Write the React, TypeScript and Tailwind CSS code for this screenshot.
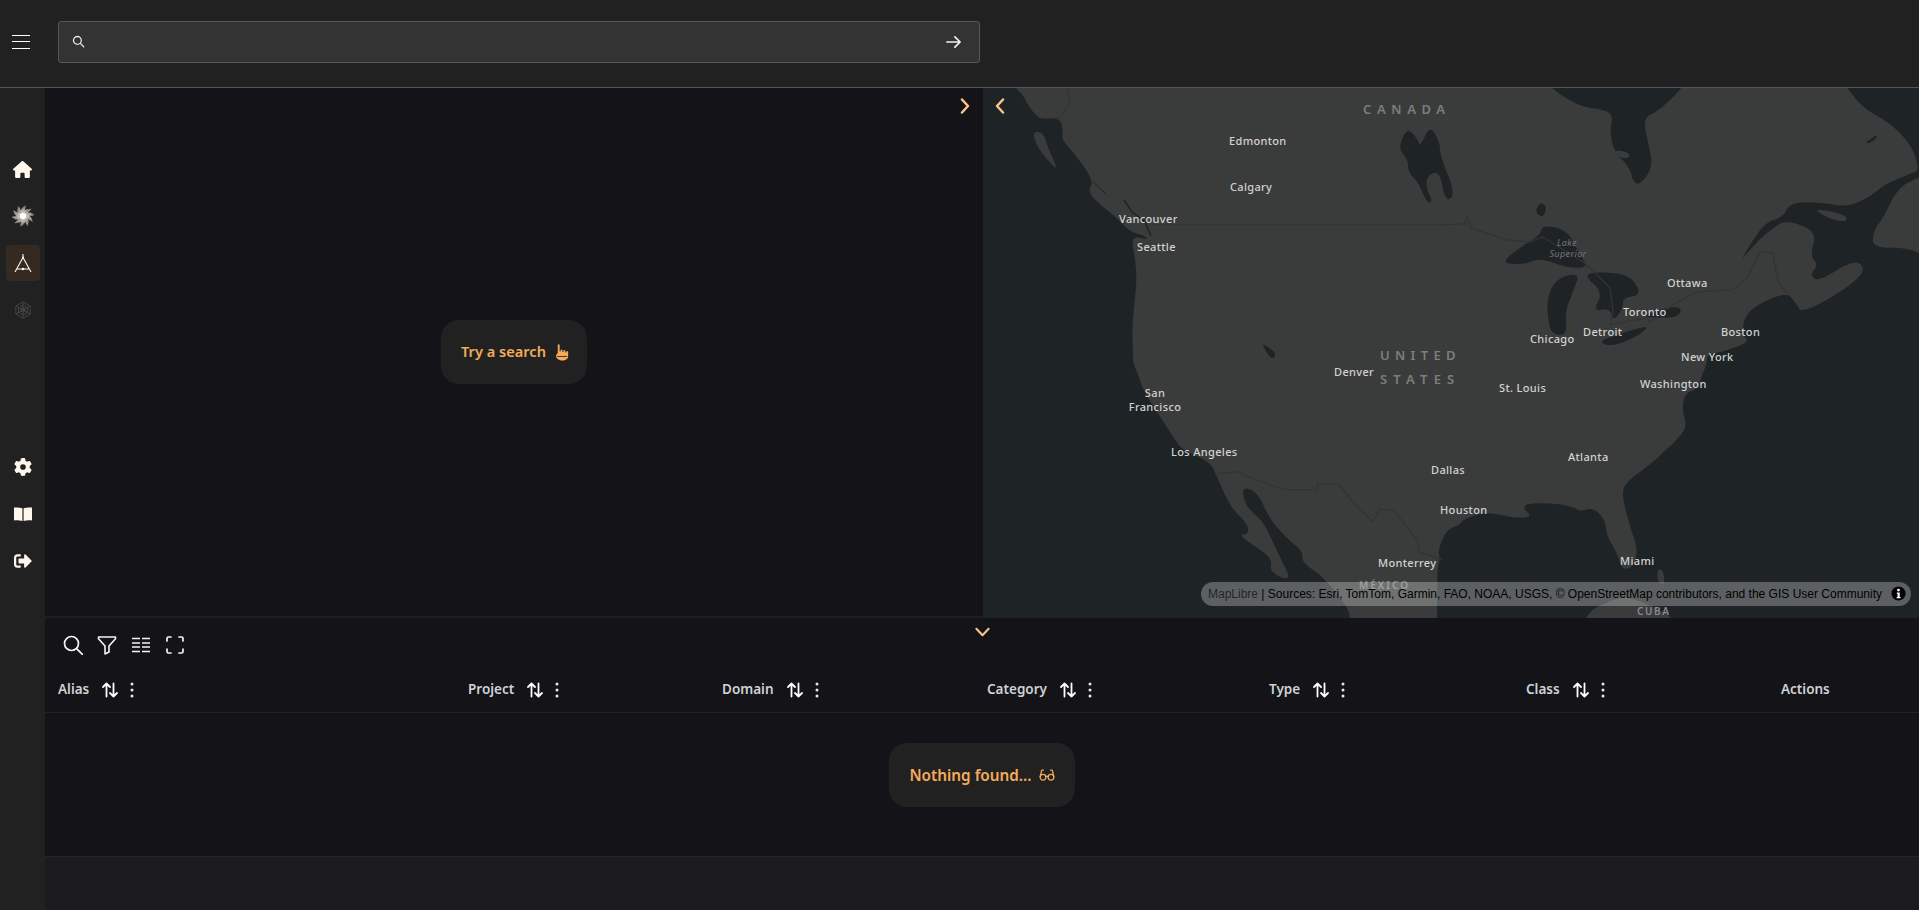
import React from "react";
import { FaSignOutAlt } from "react-icons/fa";
import { FaHouse, FaGear } from "react-icons/fa6";

const LAND = "#3a3c3c";
const WATER = "#1e2326";

const waterPolys = [
  "960,70 960,70 1012,70 1012,70 1015,88 1023,95 1028,105 1037,117 1043,119 1060,118 1063,130 1062,140 1073,152 1085,168 1093,182 1088,192 1100,205 1117,218 1130,232 1145,236 1148,240 1131,236 1135,258 1137,282 1132,325 1133,353 1133,363 1139,377 1143,390 1160,417 1175,440 1182,450 1210,462 1217,477 1230,507 1248,525 1248,535 1238,535 1260,550 1272,560 1270,573 1292,582 1280,558 1265,525 1255,515 1245,505 1242,487 1257,492 1270,520 1288,540 1303,552 1302,563 1323,577 1347,607 1350,617 1352,640 1352,640 960,640 960,640",
  "1437,640 1437,640 1437,570 1440,560 1438,550 1447,530 1460,525 1463,520 1483,513 1500,515 1513,518 1533,518 1520,505 1547,503 1573,507 1580,512 1593,508 1605,520 1607,537 1617,553 1622,570 1633,568 1638,550 1630,527 1622,497 1625,483 1650,465 1663,453 1677,440 1687,427 1682,410 1685,393 1697,390 1703,373 1707,363 1707,355 1723,352 1750,342 1742,335 1745,315 1762,302 1787,293 1795,302 1803,315 1867,275 1857,258 1818,282 1810,275 1818,265 1810,255 1817,232 1787,220 1773,228 1757,242 1742,259 1742,259 1750,245 1765,223 1783,217 1790,203 1817,202 1847,207 1868,198 1887,183 1913,173 1919,170 1913,148 1893,125 1863,108 1847,88 1835,70 1835,70 1945,70 1945,70 1945,640 1945,640",
  "1540,70 1540,70 1550,88 1580,107 1607,110 1613,118 1610,128 1613,150 1630,168 1633,182 1640,185 1653,167 1648,142 1643,118 1660,110 1682,88 1695,70 1695,70",
  "1535,212 1540,202 1547,207 1543,218",
  "1500,263 1527,243 1540,235 1543,225 1567,230 1580,255 1588,268 1567,268 1540,258 1523,265",
  "1547,298 1557,278 1580,273 1573,292 1565,312 1567,335 1553,335 1548,322",
  "1583,275 1600,272 1630,275 1642,295 1623,298 1623,308 1613,322 1610,308 1593,312 1603,292",
  "1598,342 1617,335 1650,325 1640,335 1613,347",
  "1640,317 1670,307 1682,308 1678,317 1663,318",
  "1398,148 1407,128 1417,138 1420,147 1430,125 1440,143 1440,155 1452,185 1453,198 1445,200 1440,173 1430,173 1425,185 1433,202 1427,203 1418,182 1408,172 1408,160",
  "1262,343 1275,352 1275,358 1270,358 1265,350",
  "1866,142 1878,134 1876,139 1868,144",
];

const landPolys = [
  "1032,132 1043,132 1048,148 1058,170 1050,163 1038,148",
  "1917,178 1898,188 1883,218 1873,232 1873,248 1907,248 1925,256 1945,260 1945,260 1945,170 1945,170",
  "1813,208 1847,215 1846,223 1825,217",
  "1614,150 1628,152 1630,158 1620,158",
  "1580,640 1580,640 1587,612 1613,600 1627,597 1653,607 1672,617 1685,640 1685,640",
  "1657,570 1663,570 1665,585 1658,583",
];

// corner cutting, so the coastlines read as curves instead of straight chords
function smooth(points: string, rounds = 2): string {
  let pts = points.split(" ").map((p) => p.split(",").map(Number));
  for (let r = 0; r < rounds; r++) {
    const next: number[][] = [];
    pts.forEach((p, i) => {
      const q = pts[(i + 1) % pts.length];
      next.push([p[0] * 0.75 + q[0] * 0.25, p[1] * 0.75 + q[1] * 0.25]);
      next.push([p[0] * 0.25 + q[0] * 0.75, p[1] * 0.25 + q[1] * 0.75]);
    });
    pts = next;
  }
  return pts.map((p) => p.join(",")).join(" ");
}

const borders = [
  "1152,225 1440,225 1465,224 1467,217 1471,228 1483,232 1507,240 1530,242 1543,237 1583,262 1595,273 1610,288 1613,312 1610,325 1647,318 1650,322 1673,305 1697,292 1733,290 1747,278 1760,252 1773,253 1778,282 1787,293",
  "1215,474 1242,472 1243,475 1283,490 1317,490 1318,484 1338,484 1357,507 1373,522 1380,510 1393,510 1417,540 1420,553 1442,560",
  "1047,118 1060,118 1070,102 1067,88",
];

const labels = [
  { t: "Edmonton", c: "left-[246px] top-[52px]" },
  { t: "Calgary", c: "left-[247px] top-[98px]" },
  { t: "Vancouver", c: "left-[136px] top-[130px]" },
  { t: "Seattle", c: "left-[154px] top-[158px]" },
  { t: "Ottawa", c: "left-[684px] top-[194px]" },
  { t: "Toronto", c: "left-[640px] top-[223px]" },
  { t: "Detroit", c: "left-[600px] top-[243px]" },
  { t: "Chicago", c: "left-[547px] top-[250px]" },
  { t: "Boston", c: "left-[738px] top-[243px]" },
  { t: "Los Angeles", c: "left-[188px] top-[363px]" },
  { t: "Denver", c: "left-[351px] top-[283px]" },
  { t: "Monterrey", c: "left-[395px] top-[474px]" },
  { t: "Dallas", c: "left-[448px] top-[381px]" },
  { t: "Houston", c: "left-[457px] top-[421px]" },
  { t: "New York", c: "left-[698px] top-[268px]" },
  { t: "St. Louis", c: "left-[516px] top-[299px]" },
  { t: "Washington", c: "left-[657px] top-[295px]" },
  { t: "Atlanta", c: "left-[585px] top-[368px]" },
  { t: "Miami", c: "left-[637px] top-[472px]" },
];

const areas = [
  { t: "CANADA", c: "left-[380px] top-[21px] tracking-[5.6px] text-[#7c7e7e]" },
  { t: "UNITED", c: "left-[397px] top-[267px] tracking-[5.3px] text-[#7c7e7e]" },
  { t: "STATES", c: "left-[397px] top-[291px] tracking-[6.2px] text-[#7c7e7e]" },
];

function SparkIcon() {
  const lines = Array.from({ length: 60 }, (_, i) => {
    const a = (i / 60) * Math.PI * 2;
    const r = 7 + ((i * 7) % 6) * 1.0;
    return { x: 12 + Math.cos(a) * r, y: 12 + Math.sin(a) * r * 0.95 };
  });
  return (
    <svg viewBox="0 0 24 24" className="w-[22px] h-[22px]" fill="none" stroke="#d9d4cc" strokeWidth="0.75">
      {lines.map((p, i) => (
        <line key={i} x1="12" y1="12" x2={p.x} y2={p.y} />
      ))}
      <circle cx="12" cy="12" r="3.4" fill="#fffaf2" stroke="none" />
    </svg>
  );
}

function CompassIcon() {
  return (
    <svg viewBox="0 0 20 20" className="w-[20px] h-[20px]" fill="none" stroke="#fff7ed" strokeWidth="1.1">
      <path d="M10 1V4.5M10 4.5L2 19M10 4.5L18 19M3.5 16H16.5" />
      <circle cx="10" cy="4.5" r="1" fill="#fff7ed" stroke="none" />
      <circle cx="10" cy="16" r="1.3" fill="#fff7ed" stroke="none" />
    </svg>
  );
}

function HexIcon() {
  return (
    <svg viewBox="0 0 20 20" className="w-[18px] h-[18px]" fill="none" stroke="#4b4b4b" strokeWidth="0.9">
      <path d="M10 1L18 5.5V14.5L10 19L2 14.5V5.5Z" />
      <path d="M10 4.5L15 7.2V12.8L10 15.5L5 12.8V7.2Z" />
      <path d="M10 7.5L12.3 8.7V11.3L10 12.5L7.7 11.3V8.7Z" />
      <path d="M10 1V19M2 5.5L18 14.5M18 5.5L2 14.5" />
    </svg>
  );
}

function BookIcon() {
  return (
    <svg viewBox="0 0 18 14" className="w-[18px] h-[14px]" fill="#fff7ed">
      <path d="M0 0.6C3 0.2 6 0.3 8.4 1.2V14C6 13.2 3 13 0 13.4Z" />
      <path d="M18 0.6C15 0.2 12 0.3 9.6 1.2V14C12 13.2 15 13 18 13.4Z" />
    </svg>
  );
}

function SortIcon() {
  return (
    <svg viewBox="0 0 18 18" className="w-[18px] h-[18px] shrink-0" fill="none" stroke="#ffffff" strokeWidth="1.8" strokeLinecap="round" strokeLinejoin="round">
      <path d="M5.5 15.5V2.5M2 6L5.5 2.5L9 6" />
      <path d="M12.5 2.5V15.5M9 12L12.5 15.5L16 12" />
    </svg>
  );
}

function DotsIcon() {
  return (
    <svg viewBox="0 0 6 18" className="w-[6px] h-[18px] shrink-0 ml-[10px]" fill="#e8e8e8">
      <circle cx="3" cy="3" r="1.5" />
      <circle cx="3" cy="9" r="1.5" />
      <circle cx="3" cy="15" r="1.5" />
    </svg>
  );
}

function HeaderCell({ label, sortable = true }: { label: string; sortable?: boolean }) {
  return (
    <div className="flex items-center h-[35px]">
      <span className="text-[13.5px] font-semibold text-[#cfd2d4] leading-none">{label}</span>
      {sortable && (
        <>
          <span className="ml-[12px]">
            <SortIcon />
          </span>
          <DotsIcon />
        </>
      )}
    </div>
  );
}

function MessageCard({ text, icon, className }: { text: string; icon: React.ReactNode; className: string }) {
  return (
    <div className={"flex items-center h-[64px] rounded-[18px] bg-[#212121] text-[#f5ab59] font-semibold " + className}>
      <span>{text}</span>
      {icon}
    </div>
  );
}

function Navigation({ children, active }: { children: React.ReactNode; active?: boolean }) {
  return (
    <div className={active ? "w-[34px] h-[36px] flex items-center justify-center rounded-[4px] bg-[#342a21]" : "w-[34px] h-[36px] flex items-center justify-center"}>
      {children}
    </div>
  );
}

export default function App() {
  return (
    <div className="w-full h-[910px] overflow-hidden flex flex-col bg-[#212121] font-['Noto_Sans','Liberation_Sans',sans-serif]">
      {/* top bar */}
      <header className="h-[88px] shrink-0 flex items-center pb-[4px] border-b border-[#555555] bg-[#212121]">
        <div className="ml-[12px] w-[18px] flex flex-col gap-[5.5px]">
          <span className="block h-px bg-white" />
          <span className="block h-px bg-white" />
          <span className="block h-px bg-white" />
        </div>
        <div className="ml-[28px] w-[922px] h-[42px] flex items-center px-[13px] pr-[18px] rounded-[3px] bg-[#333333] border border-[#565656]">
          <svg viewBox="0 0 14 14" className="w-[13px] h-[13px] shrink-0" fill="none" stroke="#e8e8e8" strokeWidth="1.4" strokeLinecap="round">
            <circle cx="5.8" cy="5.8" r="4.2" />
            <path d="M9 9L12.6 12.6" />
          </svg>
          <div className="flex-1" />
          <svg viewBox="0 0 16 14" className="w-[15px] h-[14px] shrink-0" fill="none" stroke="#f2f2f2" strokeWidth="1.8" strokeLinecap="round" strokeLinejoin="round">
            <path d="M1 7H15M9.5 1.5L15 7L9.5 12.5" />
          </svg>
        </div>
      </header>

      <div className="flex-1 flex min-h-0">
        {/* sidebar */}
        <aside className="w-[45px] shrink-0 flex flex-col items-center pt-[63px] bg-[#212121]">
          <div className="flex flex-col gap-[11px]">
            <Navigation><FaHouse className="w-[19px] h-[19px] text-[#fff7ed]" /></Navigation>
            <Navigation><SparkIcon /></Navigation>
            <Navigation active><CompassIcon /></Navigation>
            <Navigation><HexIcon /></Navigation>
          </div>
          <div className="flex flex-col gap-[11px] mt-[121px]">
            <Navigation><FaGear className="w-[18px] h-[18px] text-[#fff7ed]" /></Navigation>
            <Navigation><BookIcon /></Navigation>
            <Navigation><FaSignOutAlt className="w-[18px] h-[18px] text-[#fff7ed]" /></Navigation>
          </div>
        </aside>

        <main className="flex-1 flex flex-col min-w-0">
          {/* upper split */}
          <div className="h-[530px] shrink-0 flex">
            <section className="relative w-[938px] shrink-0 flex items-center justify-center bg-[#131318] border-b-2 border-[#1f1f1f]">
              <MessageCard
                className="gap-[9px] pl-[20px] pr-[18px] text-[14.6px]"
                text="Try a search"
                icon={
                  <svg viewBox="0 0 14 18" className="w-[14px] h-[17px]" fill="#f5ab59">
                    <path d="M2.5 0.5H4.5V8H5.5V6H7.5V8.5H8.5V6.7H10.5V9H11.5V7.6H13.5V13C13.5 15.8 11 17.5 7.5 17.5C4 17.5 1 15.8 0.8 13C0.7 11.5 1.3 10.4 2.5 9.8Z" />
                    <path d="M2 13.2H12.5" stroke="#212121" strokeWidth="0.9" />
                  </svg>
                }
              />
              <svg viewBox="0 0 10 16" className="absolute right-[13px] top-[10px] w-[10px] h-[16px]" fill="none" stroke="#fcc48b" strokeWidth="2.5" strokeLinecap="round" strokeLinejoin="round">
                <path d="M2 1.5L8 8L2 14.5" />
              </svg>
            </section>

            <section className="relative flex-1 h-[529.5px] overflow-hidden bg-[#1e2326]">
              <svg viewBox="983 88 936 530" preserveAspectRatio="none" className="absolute inset-0 w-full h-full">
                <rect x="960" y="70" width="980" height="570" fill={LAND} />
                {waterPolys.map((p, i) => (
                  <polygon key={i} points={smooth(p)} fill={WATER} />
                ))}
                {landPolys.map((p, i) => (
                  <polygon key={i} points={smooth(p)} fill={LAND} />
                ))}
                <polyline points="1124,200 1132,212 1145,222 1151,236" fill="none" stroke={WATER} strokeWidth="1.5" />
                <polyline points="1093,182 1105,193 1107,195" fill="none" stroke={WATER} strokeWidth="1" />
                {borders.map((p, i) => (
                  <polyline key={i} points={p} fill="none" stroke="#323434" strokeWidth="1.3" />
                ))}
              </svg>

              <svg viewBox="0 0 10 16" className="absolute left-[12px] top-[10px] w-[10px] h-[16px]" fill="none" stroke="#fcc48b" strokeWidth="2.5" strokeLinecap="round" strokeLinejoin="round">
                <path d="M8 1.5L2 8L8 14.5" />
              </svg>

              {labels.map((l) => (
                <span key={l.t} className={"absolute -translate-y-1/2 whitespace-nowrap text-[11px] font-medium tracking-[0.35px] leading-none text-[#d2d2d2] " + l.c}>
                  {l.t}
                </span>
              ))}
              <span className="absolute left-[172px] top-[304px] -translate-y-1/2 -translate-x-1/2 text-center whitespace-nowrap text-[11px] font-medium tracking-[0.35px] leading-none text-[#d2d2d2]">San</span>
              <span className="absolute left-[172px] top-[318px] -translate-y-1/2 -translate-x-1/2 text-center whitespace-nowrap text-[11px] font-medium tracking-[0.35px] leading-none text-[#d2d2d2]">Francisco</span>
              {areas.map((l) => (
                <span key={l.t} className={"absolute -translate-y-1/2 whitespace-nowrap text-[13px] font-semibold leading-none " + l.c}>
                  {l.t}
                </span>
              ))}
              <span className="absolute left-[584px] top-[154px] -translate-x-1/2 -translate-y-1/2 whitespace-nowrap text-[9px] italic leading-none text-[#757878] tracking-[0.4px]">Lake</span>
              <span className="absolute left-[585px] top-[165px] -translate-x-1/2 -translate-y-1/2 whitespace-nowrap text-[9px] italic leading-none text-[#757878] tracking-[0.4px]">Superior</span>
              <span className="absolute left-[376px] top-[497px] -translate-y-1/2 whitespace-nowrap text-[10px] font-semibold leading-none text-[#7c7e7e] tracking-[2px]">MÉXICO</span>
              <span className="absolute left-[654px] top-[523px] -translate-y-1/2 whitespace-nowrap text-[10px] font-semibold leading-none text-[#8a8a8a] tracking-[1.6px]">CUBA</span>

              {/* attribution */}
              <div className="absolute right-[8px] bottom-[12px] h-[24px] w-[710px] flex items-center justify-between pl-[7px] pr-[5px] rounded-[12px] bg-[rgba(255,255,255,0.28)] font-['Liberation_Sans',Arial,sans-serif] text-[12px] text-black">
                <span className="whitespace-nowrap">
                  <span className="text-[rgba(0,0,0,0.65)]">MapLibre</span> | Sources: Esri, TomTom, Garmin, FAO, NOAA, USGS, © OpenStreetMap contributors, and the GIS User Community
                </span>
                <svg viewBox="0 0 16 16" className="w-[15px] h-[15px] shrink-0">
                  <circle cx="8" cy="8" r="7.5" fill="#000000" />
                  <circle cx="8" cy="4.3" r="1.5" fill="#ffffff" />
                  <path d="M6.2 6.8H9.3V11.6H10.2V13H6V11.6H7V8.2H6.2Z" fill="#ffffff" />
                </svg>
              </div>
            </section>
          </div>

          {/* lower table */}
          <section className="relative h-[239px] shrink-0 bg-[#131318] rounded-tl-[4px] border-b border-[#262628]">
            <div className="h-[54px] flex items-center gap-[14px] pl-[18px]">
              <svg viewBox="0 0 20 20" className="w-[20px] h-[20px]" fill="none" stroke="#f5f5f5" strokeWidth="1.7" strokeLinecap="round">
                <circle cx="8.5" cy="8.5" r="7" />
                <path d="M13.6 13.6L19.5 19.5" />
              </svg>
              <svg viewBox="0 0 20 20" className="w-[20px] h-[20px]" fill="none" stroke="#f5f5f5" strokeWidth="1.6" strokeLinejoin="round">
                <path d="M1.5 2H18.5V3.8L12 11V17L8 19V11L1.5 3.8Z" />
              </svg>
              <svg viewBox="0 0 20 20" className="w-[20px] h-[20px]" fill="none" stroke="#f5f5f5" strokeWidth="1.6">
                <path d="M1 3.5H9M11 3.5H19M1 8H9M11 8H19M1 12H9M11 12H19M1 16.5H9M11 16.5H19" />
              </svg>
              <svg viewBox="0 0 20 20" className="w-[20px] h-[20px]" fill="none" stroke="#f5f5f5" strokeWidth="1.7" strokeLinecap="round" strokeLinejoin="round">
                <path d="M2 6V3.5A1.5 1.5 0 0 1 3.5 2H6M14 2H16.5A1.5 1.5 0 0 1 18 3.5V6M18 14V16.5A1.5 1.5 0 0 1 16.5 18H14M6 18H3.5A1.5 1.5 0 0 1 2 16.5V14" />
              </svg>
            </div>

            <svg viewBox="0 0 16 10" className="absolute left-[929.5px] top-[9px] w-[15px] h-[10px]" fill="none" stroke="#fcc48b" strokeWidth="2.2" strokeLinecap="round" strokeLinejoin="round">
              <path d="M1.5 1.5L8 8.5L14.5 1.5" />
            </svg>

            <div className="grid grid-cols-[410px_254px_265px_282px_257px_255px_1fr] h-[41px] pl-[13px] pb-[5px] border-b border-[#232326]">
              <HeaderCell label="Alias" />
              <HeaderCell label="Project" />
              <HeaderCell label="Domain" />
              <HeaderCell label="Category" />
              <HeaderCell label="Type" />
              <HeaderCell label="Class" />
              <HeaderCell label="Actions" sortable={false} />
            </div>

            <div className="flex justify-center pt-[30px]">
              <MessageCard
                className="gap-[7px] px-[20px] text-[15.3px]"
                text="Nothing found..."
                icon={
                  <svg viewBox="0 0 18 14" className="w-[16px] h-[14px]" fill="none" stroke="#f5ab59" strokeWidth="1.4" strokeLinecap="round">
                    <circle cx="4.5" cy="9.5" r="3.2" />
                    <circle cx="13.5" cy="9.5" r="3.2" />
                    <path d="M7.7 9Q9 7.8 10.3 9M1.3 9L2.8 2.5Q3.2 1 5 1.5M16.7 9L15.2 2.5Q14.8 1 13 1.5" />
                  </svg>
                }
              />
            </div>
          </section>

          <footer className="flex-1 bg-[#1c1c1e]" />
        </main>
      </div>
    </div>
  );
}
